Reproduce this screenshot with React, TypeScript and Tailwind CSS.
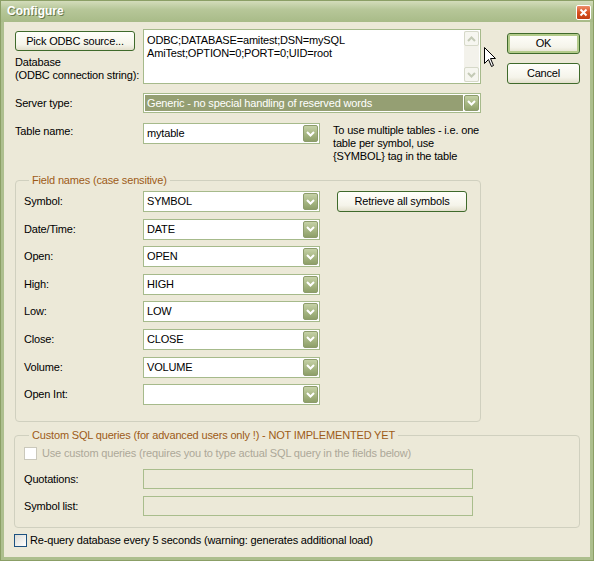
import type { ReactNode } from 'react'

const font = { fontFamily: '"Liberation Sans", Arial, sans-serif' }

function Chevron({ color = '#ffffff' }: { color?: string }) {
  return (
    <svg width="9" height="6" viewBox="0 0 9 6">
      <path d="M1 1 L4.5 4.5 L8 1" fill="none" stroke={color} strokeWidth="2" />
    </svg>
  )
}

function XpButton({ children, className = '', isDefault = false }: { children: ReactNode; className?: string; isDefault?: boolean }) {
  return (
    <div
      className={`flex items-center justify-center rounded-[3px] border border-[#3f6a2b] bg-[linear-gradient(#fffffb,#f5f4ea_70%,#e2dfcc)] text-[11px] text-black ${
        isDefault ? 'shadow-[inset_0_0_0_2px_#b3cb8a]' : ''
      } ${className}`}
    >
      {children}
    </div>
  )
}

function Combo({ value, width = 'w-[177px]', selected = false, height = 'h-[21px]' }: { value: string; width?: string; selected?: boolean; height?: string }) {
  return (
    <div className={`flex ${width} ${height} border border-[#a6ba8b] bg-white`}>
      <div className={`flex-1 flex items-center ${selected ? 'm-[1px] bg-[#959f73] text-white pl-[2px]' : 'pl-[3px] text-black'}`}>
        {value}
      </div>
      <div className="my-[1px] mr-[1px] w-[15px] flex items-center justify-center rounded-[2px] border border-[#8d9c6c] bg-[linear-gradient(#c5d1a6,#a3b37f_60%,#8e9f69)]">
        <Chevron />
      </div>
    </div>
  )
}

function ScrollArrow({ up }: { up?: boolean }) {
  return (
    <div className="h-[15px] flex items-center justify-center rounded-[2px] border border-[#d6d9c9] bg-[#f6f6f0]">
      <svg width="9" height="6" viewBox="0 0 9 6" className={up ? 'rotate-180' : ''}>
        <path d="M1 1 L4.5 4.5 L8 1" fill="none" stroke="#c4cab6" strokeWidth="2" />
      </svg>
    </div>
  )
}

const fields = [
  ['Symbol:', 'SYMBOL'],
  ['Date/Time:', 'DATE'],
  ['Open:', 'OPEN'],
  ['High:', 'HIGH'],
  ['Low:', 'LOW'],
  ['Close:', 'CLOSE'],
  ['Volume:', 'VOLUME'],
  ['Open Int:', ''],
]

export default function App() {
  return (
    <div style={font} className="w-[594px] h-[561px] flex flex-col bg-[#adbf8e] border border-[#8b9f66] text-[11px] leading-[13px] tracking-[-0.17px] text-black select-none">
      {/* title bar */}
      <div className="h-[21px] flex items-center justify-between bg-[linear-gradient(#d3dcbb,#b7c799_40%,#a8bb88)] pl-[6px] pr-[2px]">
        <span className="text-[12px] font-bold tracking-normal text-white [text-shadow:1px_1px_0_#6b7b4c]">Configure</span>
        <div className="w-[15px] h-[15px] mt-[2px] flex items-center justify-center rounded-[2px] border border-white bg-[linear-gradient(#ec8e6b,#d9501f_50%,#c13c10)]">
          <svg width="9" height="9" viewBox="0 0 9 9">
            <path d="M1.5 1.5 L7.5 7.5 M7.5 1.5 L1.5 7.5" stroke="white" strokeWidth="2" />
          </svg>
        </div>
      </div>

      {/* body */}
      <div className="relative flex-1 mx-[3px] mb-[3px] bg-[#ece9d8] pl-[11px] pt-[7px]">
        {/* connection row */}
        <div className="flex">
          <div className="w-[128px] pt-[2px] whitespace-nowrap">
            <XpButton className="w-[120px] h-[20px]">Pick ODBC source...</XpButton>
            <div className="mt-[5px]">
              Database
              <br />
              (ODBC connection string):
            </div>
          </div>
          <div className="flex w-[338px] h-[55px] border border-[#a6ba8b] bg-white">
            <div className="flex-1 pl-[3px] pt-[4px]">
              ODBC;DATABASE=amitest;DSN=mySQL
              <br />
              AmiTest;OPTION=0;PORT=0;UID=root
            </div>
            <div className="w-[15px] my-[1px] mr-[1px] flex flex-col justify-between bg-[#f3f2eb]">
              <ScrollArrow up />
              <ScrollArrow />
            </div>
          </div>
          <div className="ml-[26px] pt-[4px] flex flex-col gap-[9px]">
            <XpButton isDefault className="w-[73px] h-[21px]">OK</XpButton>
            <XpButton className="w-[73px] h-[21px]">Cancel</XpButton>
          </div>
        </div>

        {/* mouse pointer */}
        <svg className="absolute left-[480px] top-[25px]" width="13" height="21" viewBox="0 0 13 21">
          <path d="M0.5 0.5 L0.5 16.5 L4.5 12.5 L7.5 19.5 L9.5 18.5 L6.5 11.5 L11.5 11.5 Z" fill="white" stroke="black" strokeWidth="1" />
        </svg>

        {/* server type */}
        <div className="flex items-center mt-[9px]">
          <div className="w-[128px]">Server type:</div>
          <Combo value="Generic - no special handling of reserved words" width="w-[338px]" height="h-[20px]" selected />
        </div>

        {/* table name */}
        <div className="flex mt-[10px]">
          <div className="w-[128px] pt-[2px]">Table name:</div>
          <Combo value="mytable" />
          <div className="ml-[13px] pt-[1px]">
            To use multiple tables - i.e. one
            <br />
            table per symbol, use
            <br />
            {'{SYMBOL}'} tag in the table
          </div>
        </div>

        {/* field names */}
        <fieldset className="mt-[11px] w-[466px] rounded-[4px] border border-[#d0d0bf] pl-[8px] pb-[16px]">
          <legend className="ml-[5px] px-[3px] text-[#9d5b17]">Field names (case sensitive)</legend>
          <div className="flex flex-col gap-[6.6px] pt-[4px]">
            {fields.map(([label, value], i) => (
              <div key={label} className="flex items-center">
                <div className="w-[119px]">{label}</div>
                <Combo value={value} />
                {i === 0 && <XpButton className="ml-[17px] w-[130px] h-[21px]">Retrieve all symbols</XpButton>}
              </div>
            ))}
          </div>
        </fieldset>

        {/* custom sql */}
        <fieldset className="mt-[7px] -ml-[1px] w-[566px] rounded-[4px] border border-[#d0d0bf] pl-[9px] pb-[11px]">
          <legend className="ml-[5px] px-[3px] text-[#9d5b17]">
            Custom SQL queries (for advanced users only !) - NOT IMPLEMENTED YET
          </legend>
          <div className="flex items-center pt-[5px] text-[#aca899]">
            <div className="w-[13px] h-[13px] border border-[#cac8bb] bg-white" />
            <span className="ml-[5px]">Use custom queries (requires you to type actual SQL query in the fields below)</span>
          </div>
          <div className="mt-[9px] flex flex-col gap-[7px]">
            <div className="flex items-center">
              <div className="w-[119px]">Quotations:</div>
              <div className="w-[330px] h-[20px] border border-[#a9bd8c]" />
            </div>
            <div className="flex items-center">
              <div className="w-[119px]">Symbol list:</div>
              <div className="w-[330px] h-[20px] border border-[#a9bd8c]" />
            </div>
          </div>
        </fieldset>

        {/* re-query */}
        <div className="flex items-center mt-[6px] -ml-[1px]">
          <div className="w-[13px] h-[13px] border border-[#1c5180] bg-[linear-gradient(135deg,#dcdcd6,#ffffff)]" />
          <span className="ml-[3px]">Re-query database every 5 seconds (warning: generates additional load)</span>
        </div>
      </div>
    </div>
  )
}
